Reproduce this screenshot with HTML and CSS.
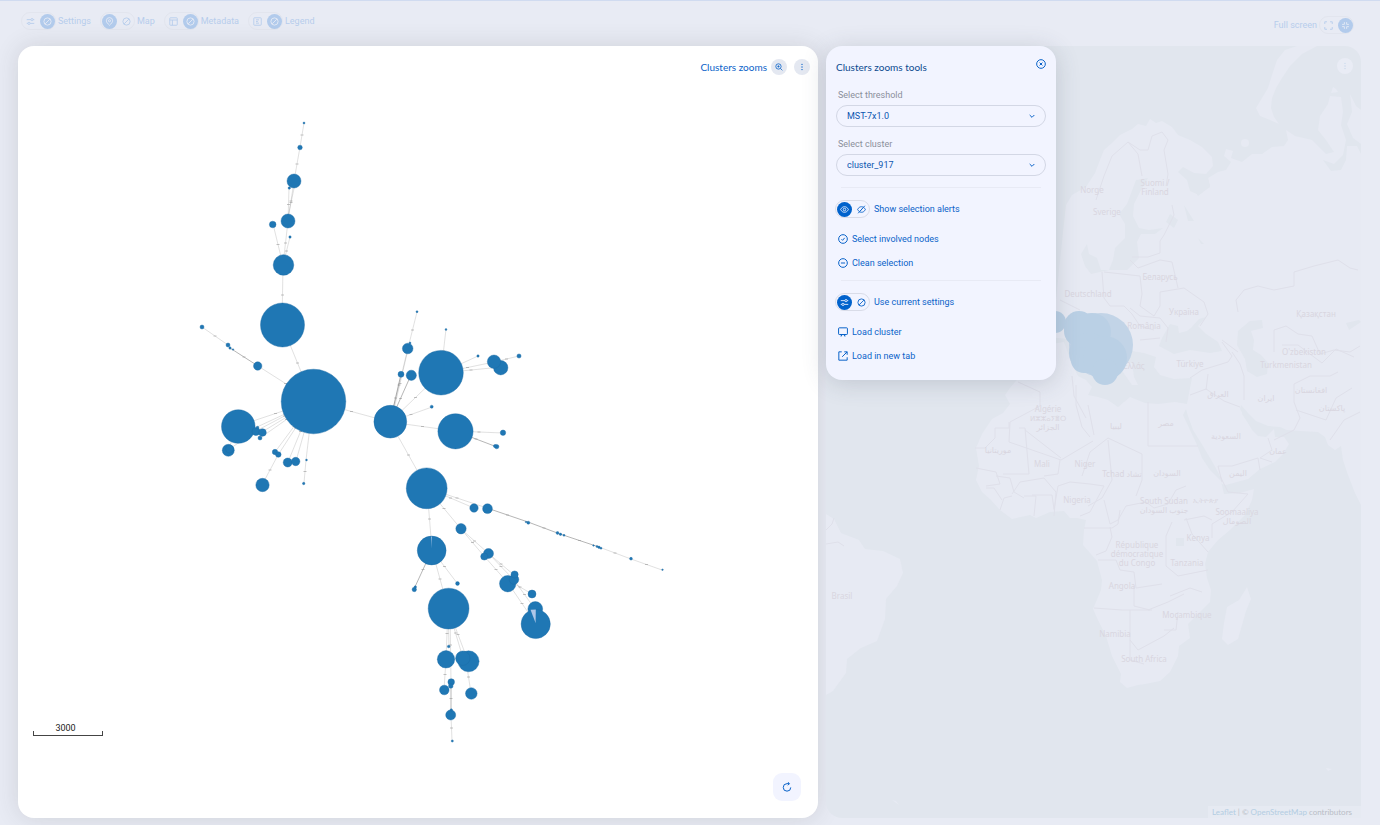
FILE: index.html
```html
<!DOCTYPE html>
<html lang="en">
<head>
<meta charset="utf-8">
<title>Clusters zooms</title>
<link rel="stylesheet" href="styles.css">
</head>
<body>
<svg class="defs" aria-hidden="true">
  <symbol id="i-sliders" viewBox="0 0 12 12"><path d="M1 3.5h5.5M9.5 3.5H11M1 8.5h1.5M5.5 8.5H11"/><circle cx="8" cy="3.5" r="1.5"/><circle cx="4" cy="8.5" r="1.5"/></symbol>
  <symbol id="i-off" viewBox="0 0 12 12"><circle cx="6" cy="6" r="4.8"/><path d="M2.8 9.2l6.4-6.4"/></symbol>
  <symbol id="i-pin" viewBox="0 0 12 12"><path d="M6 11C3.5 8.6 1.8 6.9 1.8 5a4.2 4.2 0 0 1 8.4 0C10.200 6.900 8.500 8.600 6 11z"/><circle cx="6" cy="5" r="1.400"/></symbol>
  <symbol id="i-table" viewBox="0 0 12 12"><rect x="1" y="1" width="10" height="10" rx="1"/><path d="M1 4h10M4.500 4v7"/></symbol>
  <symbol id="i-legend" viewBox="0 0 12 12"><rect x="1" y="1" width="10" height="10" rx="1"/><path d="M4 3.800h4M4 6h2.500M4 8.200h4"/></symbol>
  <symbol id="i-expand" viewBox="0 0 12 12"><path d="M1 4V1h3M8 1h3v3M11 8v3H8M4 11H1V8"/></symbol>
  <symbol id="i-shrink" viewBox="0 0 12 12"><path d="M1.500 4.500h3v-3M7.500 1.500v3h3M10.500 7.500h-3v3M4.500 10.500v-3h-3"/></symbol>
  <symbol id="i-zoom" viewBox="0 0 12 12"><circle cx="5.200" cy="5.200" r="4"/><path d="M8.200 8.200L11 11M3.500 5.200h3.400M5.200 3.500v3.400"/></symbol>
  <symbol id="i-dots" viewBox="0 0 12 12"><circle cx="6" cy="2" r=".5"/><circle cx="6" cy="6" r=".5"/><circle cx="6" cy="10" r=".5"/></symbol>
  <symbol id="i-close" viewBox="0 0 12 12"><circle cx="6" cy="6" r="5.200"/><path d="M4.300 4.300l3.400 3.400M7.700 4.300L4.300 7.700"/></symbol>
  <symbol id="i-eye" viewBox="0 0 12 12"><path d="M.8 6C2 3.600 3.800 2.300 6 2.300S10 3.600 11.200 6C10 8.400 8.200 9.700 6 9.700S2 8.400.8 6z"/><circle cx="6" cy="6" r="1.700"/></symbol>
  <symbol id="i-eyeoff" viewBox="0 0 12 12"><path d="M.8 6C2 3.600 3.800 2.300 6 2.300S10 3.600 11.200 6C10 8.400 8.200 9.700 6 9.700S2 8.400.8 6zM1.500 11l9-10M4.500 7.600l3-3.200"/></symbol>
  <symbol id="i-check" viewBox="0 0 12 12"><circle cx="6" cy="6" r="5.200"/><path d="M4.200 6.300l1.300 1.300 2.500-3"/></symbol>
  <symbol id="i-minus" viewBox="0 0 12 12"><circle cx="6" cy="6" r="5.200"/><path d="M3.500 6h5"/></symbol>
  <symbol id="i-screen" viewBox="0 0 12 12"><path d="M1.500 1h9a.8.8 0 0 1 .8.8v6.400a.8.8 0 0 1-.8.8h-9a.8.8 0 0 1-.8-.8V1.800a.8.8 0 0 1 .8-.8zM4.300 9v1.800H3M7.700 9v1.800H9"/></symbol>
  <symbol id="i-newtab" viewBox="0 0 12 12"><path d="M4.500 1H1v10h10V7.500M7.500 1H11v3.500M11 1L5 7"/></symbol>
  <symbol id="i-chevron" viewBox="0 0 12 12"><path d="M2.500 4.500L6 8l3.500-3.500"/></symbol>
  <symbol id="i-reload" viewBox="0 0 12 12"><path d="M10.500 6.500A4.500 4.500 0 1 1 6 2h2.800M7 .2L8.900 2 7 3.900"/></symbol>
</svg>

<header class="topbar">
  <nav class="switches" aria-label="Panels">
    <label class="switch"><span class="pill"><input type="checkbox"><svg class="ic"><use href="#i-sliders"/></svg><svg class="ic on"><use href="#i-off"/></svg></span>Settings</label>
    <label class="switch"><span class="pill"><input type="checkbox" checked><svg class="ic on"><use href="#i-pin"/></svg><svg class="ic"><use href="#i-off"/></svg></span>Map</label>
    <label class="switch"><span class="pill"><input type="checkbox"><svg class="ic"><use href="#i-table"/></svg><svg class="ic on"><use href="#i-off"/></svg></span>Metadata</label>
    <label class="switch"><span class="pill"><input type="checkbox"><svg class="ic"><use href="#i-legend"/></svg><svg class="ic on"><use href="#i-off"/></svg></span>Legend</label>
  </nav>
  <label class="switch fullscreen">Full screen<span class="pill"><input type="checkbox"><svg class="ic"><use href="#i-expand"/></svg><svg class="ic on"><use href="#i-shrink"/></svg></span></label>
</header>

<main class="workspace">
  <section class="tree">
    <svg class="graph" id="graph" viewBox="18 46 800 772" role="img" aria-label="Minimum spanning tree"></svg>
    <div class="tree-head">
      <span>Clusters zooms</span>
      <button class="round" type="button" aria-label="Zoom tools"><svg class="ic"><use href="#i-zoom"/></svg></button>
      <button class="round more" type="button" aria-label="More"><svg class="ic"><use href="#i-dots"/></svg></button>
    </div>
    <div class="scale"><span>3000</span></div>
    <button class="reload" type="button" aria-label="Reload"><svg class="ic"><use href="#i-reload"/></svg></button>
  </section>

  <section class="mapside">
    <div class="map">
      <svg class="world" viewBox="826 46 535 772" preserveAspectRatio="xMidYMid slice" role="img" aria-label="World map">
        <g class="land">
          <path d="M1297 46L1285 50 1277 60 1272 75 1268 88 1262 98 1256 108 1260 116 1270 120 1279 124 1274 117 1271 108 1272 98 1276 88 1282 78 1290 66 1302 54 1317 46z"/>
          <path d="M1333 87l3 2 2 3-7 1z"/><circle cx="1245" cy="143" r="4"/>
          <path d="M1350 94l6 12 5 4v34l-8-6-6-14 5-12z"/>
          <path d="M1063 232L1066 205 1072 195 1086 187 1095 173 1100 160 1104 150 1112 143 1120 135 1132 129 1138 124 1146 126 1150 119 1156 123 1162 121 1172 127 1178 135 1190 140 1202 147 1212 157 1213 166 1206 174 1194 173 1183 167 1178 172 1187 180 1190 191 1199 195 1210 187 1208 178 1218 172 1226 170 1231 162 1224 156 1226 149 1233 151 1231 158 1242 162 1252 154 1262 154 1272 147 1284 146 1288 140 1286 130 1295 136 1312 140 1326 154 1334 152 1326 140 1318 130 1320 116 1328 104 1330 96 1341 97 1343 112 1341 125 1346 140 1343 155 1334 164 1323 160 1331 171 1341 170 1346 160 1347 146 1357 146 1361 154V505L1355 493 1348 475 1343 460 1341 446 1335 450 1328 445 1325 437 1318 432 1300 431 1287 430 1280 427 1268 426 1256 421 1248 413 1241 405 1240 409 1246 419 1252 430 1258 436 1266 437 1271 432 1274 429 1275 437 1284 437 1289 444 1283 454 1275 462 1260 469 1248 479 1226 485 1222 484 1219 474 1213 463 1203 446 1193 430 1188 416 1186 409 1183 415 1190 430 1197 445 1202 458 1210 470 1221 481 1224 494 1240 493 1254 489 1252 500 1245 515 1230 530 1218 540 1208 552 1205 564 1207 578 1211 590 1210 602 1200 612 1188 624 1190 638 1179 646 1178 656 1170 672 1160 681 1145 684 1138 685 1127 688 1120 682 1121 674 1112 656 1106 636 1098 620 1093 609 1101 590 1102 580 1097 561 1083 545 1084 530 1086 520 1077 518 1070 518 1064 511 1050 512 1036 518 1030 515 1012 519 1000 510 990 499 982 492 976 480 979 466 976 448 982 434 992 419 1003 413 1010 404 1005 395 1010 388 1020 376 1040 340 1056 300z"/>
          <path d="M1247 587l4 12-5 12-8 28-10 6-6-6 2-16 3-16 12-7z"/>
          <path d="M826 514l8 5 7 14 18 7 6 9 18 2 17 8 3 14-6 13-11 13-1 20-8 22-16 7-14 11-1 14-13 18-7 4z"/>
          <path d="M892 800l4 1 3 4zM1326 768l6 1-4 2z"/>
        </g>
        <g class="water">
          <path d="M1136 180l12-2-8 14-6 12-1 12 6 12 10 2 14-2-8 6-14 0-4 8 2 16-12 12-18 0-18 4-6-8-4-12 6-10 2 10 8 4 4 12 8 0 4-10 2-12 10-10 0-14-6-10 8-10z"/>
          <path d="M1170 214l8 6-4 8-8-6zM1184 205l5 8 5 8-6 0zM1188 180l20-2 2 8-12 10zM1198 238l6 6-3 0z"/>
          <path d="M1040 380l12-36 12-2 8 22 6 12 8 4 6 7-4 8 10 2 10 3 10 7 12-10 15 6 13 1 17-2 12 2 3-16 2-10-18 1-14-4-6-8 2-10-12-4-12-2-14 10 14 2 2 14 4 8-6 0-14-20-20-10-20-20-10 4-20-2z"/>
          <path d="M1159 346l3-8 8-14 8 2 1 7 8-2 4-3 8-9 7-2-8 9 8 8 12 8 4 9-12 2-20-3-16 4z"/>
          <path d="M1238 331l12-10 12-1 1 8-12 3 3 9-1 10 8 5 7 8-1 11-10 3-10-6-2-12-8-14z"/>
          <path d="M1243 408l8 14 10 4-3 8-8-8-8-12zM1346 323l13-3 2 2-12 8zM1176 538h8v8h-8z"/>
        </g>
        <g class="borders">
          <path d="M1096 200l8-24 8-20 16-14 12 8 8 0 4-14 10-4 6 8-4 10 4 24-2 12M1128 142l10 12 4 22M1172 205l2 10-10 20-4 6 0 12-12 4-16 0M1130 260l8 8 22-8 12 2 6 26M1102 272l2 26 6 8 14 0 8 8M1060 300l20 10M1104 272l36 4 2 18-2 12 14 10 6-10 0-14 24-4 20 14 4 12-8 12M1130 308l10 8 20 2 8 10-2 14M1132 314l8 12 14 4M1140 340l20-2M1238 312l-2-12 8-10 14-4 16 4 20-4 0-14 20-6 24-6 12 8 8 2M1274 352v-22l12-4 12 8 14 2 8 18 14-4 16 2 10-6M1282 345l16 0 24 18 14-14 18 8M1190 378l12-8 26-8 4-6-10-14M1222 340l16 12M1232 352l8 12 4 12 0 24M1190 395l16-6 18 12 16 6M1206 390l2-16M1274 440l20-10 6-12-6-16 0-18 16-8 20 0 8-4M1296 410l30 10 10-22 16-10M1330 440l14-20 16-8M1072 376l2 20 12 22M1076 385v20l6 22 8 10M1018 382l22 10 0 14-30 16-1 20 52 18 32-19M1009 422v6h-14v10l-10 10h-10M1019 428h6l4 46h-26M1025 430l36 28M1148 402v44M1142 454l-34-16-18 14-8 24M1148 446h50M1142 454v26l-6 16M1088 405l6 30M1108 440l4 40-10 18-14 8M976 468l20 4 4 12-14 2M996 476l14 2 4 14 10 6M986 488l8 0 8 12M1000 510l4-12 8-2M1024 496h12l-2 20M1032 495l20 0 2 14M1012 494l8-12 24-4 12 14-2 24M1060 460l-2 14-14 2M1054 510l4-24 12-4 20 2 14 2M1104 486l-14 26-10 4M1104 500l6 24 8-4 8-14 20-4 8 6 14-4 8-14 10-4M1084 528h28l6-4 2-14M1098 560h18l4 10 14 2 2 16 26-4M1096 555l10-4 6-14-2-10M1094 608l28 2 30 0M1134 586v20l16 4M1130 610l0 50 14 4M1130 640l8 10 26-14 10-8M1148 610l20-8 16-8M1172 522l-6 14 0 30 12 10 30-6M1186 518l6 16 16 18M1212 538v-14l20-12 16-18-20-2-8-16M1184 520l20-4 8 4M1170 596l20-8 12 4M1178 612l-2 18-12 0M1222 482l-4-16 14 0 26-8 2 12M1272 462l-12-4 12-8-4-12M826 530l6-6 2-6M826 544l12-2 6 4"/>
        </g>
        <g class="names">
          <text x="1092" y="193">Norge</text><text x="1155" y="186">Suomi /</text><text x="1155" y="195">Finland</text>
          <text x="1107" y="215">Sverige</text><text x="1160" y="280">Беларусь</text><text x="1088" y="297">Deutschland</text>
          <text x="1184" y="315">Україна</text><text x="1144" y="329">România</text><text x="1316" y="317">Қазақстан</text>
          <text x="1304" y="355">O'zbekiston</text><text x="1286" y="368">Turkmenistan</text><text x="1190" y="367">Türkiye</text><text x="1134" y="369">Ελλάς</text>
          <text x="1218" y="397">العراق</text><text x="1266" y="401">ایران</text><text x="1311" y="393">افغانستان</text><text x="1332" y="411">پاکستان</text>
          <text x="1048" y="412">Algérie</text><text class="small" x="1048" y="421">ⵍⵣⵣⴰⵢⴻⵔ</text><text x="1048" y="430">الجزائر</text>
          <text x="998" y="453">موريتانيا</text><text x="1042" y="467">Mali</text><text x="1085" y="467">Niger</text><text x="1122" y="477">Tchad تشاد</text>
          <text x="1116" y="429">ليبيا</text><text x="1166" y="426">مصر</text><text x="1226" y="439">السعودية</text><text x="1278" y="454">عمان</text><text x="1238" y="476">اليمن</text>
          <text x="1167" y="476">السودان</text><text x="1077" y="503">Nigeria</text><text x="1164" y="504">South Sudan</text><text x="1164" y="513">جنوب السودان</text>
          <text class="small" x="1205" y="503">ኢትዮጵያ</text><text x="1237" y="515">Soomaaliya</text><text x="1237" y="524">الصومال</text><text x="1198" y="541">Kenya</text>
          <text x="1137" y="548">République</text><text x="1137" y="557">démocratique</text><text x="1137" y="566">du Congo</text><text x="1187" y="566">Tanzania</text>
          <text x="1122" y="589">Angola</text><text x="1187" y="618">Moçambique</text><text x="1115" y="637">Namibia</text><text x="1144" y="662">South Africa</text><text x="842" y="599">Brasil</text>
        </g>
        <g class="bubbles">
          <circle class="pale" cx="1101" cy="345" r="32"/>
          <circle cx="1055" cy="322" r="11"/><circle cx="1079" cy="326" r="15"/><circle cx="1080" cy="331" r="16"/><circle cx="1092" cy="332" r="19"/><circle cx="1089" cy="353" r="20"/><circle cx="1084" cy="360" r="13"/><circle cx="1105" cy="358" r="22"/><circle cx="1105" cy="372" r="13"/>
        </g>
      </svg>
      <button class="round mapmore" type="button" aria-label="Map options"><svg class="ic"><use href="#i-dots"/></svg></button>
      <div class="credit"><a href="#">Leaflet</a> | © <a href="#">OpenStreetMap</a> contributors</div>
    </div>

    <aside class="tools">
      <div class="tools-head"><h2>Clusters zooms tools</h2><button class="close" type="button" aria-label="Close"><svg class="ic"><use href="#i-close"/></svg></button></div>
      <label class="caption" for="threshold">Select threshold</label>
      <div class="picker"><select id="threshold"><option>MST-7x1.0</option></select><svg class="ic"><use href="#i-chevron"/></svg></div>
      <label class="caption" for="cluster">Select cluster</label>
      <div class="picker"><select id="cluster"><option>cluster_917</option></select><svg class="ic"><use href="#i-chevron"/></svg></div>
      <hr>
      <label class="switch"><span class="pill"><input type="checkbox" checked><svg class="ic on"><use href="#i-eye"/></svg><svg class="ic"><use href="#i-eyeoff"/></svg></span>Show selection alerts</label>
      <div class="actions">
        <button type="button"><svg class="ic"><use href="#i-check"/></svg>Select involved nodes</button>
        <button type="button"><svg class="ic"><use href="#i-minus"/></svg>Clean selection</button>
      </div>
      <hr class="tight">
      <label class="switch"><span class="pill"><input type="checkbox" checked><svg class="ic on"><use href="#i-sliders"/></svg><svg class="ic"><use href="#i-off"/></svg></span>Use current settings</label>
      <div class="actions">
        <button type="button"><svg class="ic"><use href="#i-screen"/></svg>Load cluster</button>
        <button type="button"><svg class="ic"><use href="#i-newtab"/></svg>Load in new tab</button>
      </div>
    </aside>
  </section>
</main>
<script src="graph.js"></script>
</body>
</html>
```

FILE: styles.css
```css
:root {
  --blue: #0a63c9;
  --fill: #0062cc;
  --line: #d9dce8;
  --page: #e8ebf4;
  --panel: #f2f4ff;
  --faded: #b7cdec;
}
* { box-sizing: border-box; }
body {
  margin: 0;
  height: 100vh;
  display: flex;
  flex-direction: column;
  background: var(--page);
  border-top: 1px solid #d0dbf0;
  color: var(--blue);
  font: 9px/12px Roboto, "Noto Sans", sans-serif;
}
button { font: inherit; color: inherit; border: 0; background: none; padding: 0; display: flex; align-items: center; justify-content: center; }
.defs { display: none; }
.ic { display: block; flex: none; width: 10px; height: 10px; fill: none; stroke: currentColor; stroke-width: 1.2; overflow: visible; }

.topbar { flex: none; min-height: 45px; padding: 11px 26px 11px 21px; display: flex; justify-content: space-between; align-items: flex-start; color: var(--faded); }
.switches { display: flex; gap: 9px; }
.switch { display: flex; align-items: center; gap: 4px; }
.topbar .switch { gap: 2px; }
.fullscreen { padding-top: 4px; }
.pill { position: relative; display: flex; align-items: center; gap: 2px; width: 35px; height: 18px; padding: 1px; border: 1px solid var(--line); border-radius: 9px; }
.pill input { position: absolute; inset: 0; width: 100%; height: 100%; margin: 0; opacity: 0; }
.pill .ic { width: 15px; height: 15px; padding: 3px; border-radius: 50%; }
.pill .on { background: var(--fill); color: #e6eeff; }
.topbar .pill { border-color: #e2e5ee; }
.topbar .on { background: #b2cbec; color: #e6ebf5; }
.tools .pill { margin-left: -1px; }

.workspace { flex: 1; min-height: 0; display: grid; grid-template-columns: 800fr 535fr; gap: 8px; padding: 0 19px 7px 18px; }
.tree { position: relative; min-width: 0; background: #fff; border-radius: 16px; box-shadow: 0 0 24px rgba(60, 60, 60, .14); }
.graph { display: block; position: absolute; width: 100%; height: 100%; }
.edge { stroke: #777; stroke-opacity: .38; stroke-width: .6; }
.strong { stroke: #333; stroke-opacity: .6; }
.tag { stroke: #999; stroke-opacity: .6; stroke-width: 1; }
.node { fill: #1f77b4; stroke: #1b6ba3; stroke-width: .4; }
.wedge { fill: #aec7e8; }
.tree-head { position: absolute; top: 13px; right: 8px; display: flex; align-items: center; gap: 4px; font: 10px/16px Lato, sans-serif; }
.round { width: 16px; height: 16px; border-radius: 50%; background: #e4e8f1; }
.round .ic { width: 8px; height: 8px; }
.more { margin-left: 3px; }
.scale { position: absolute; left: 15px; bottom: 82px; width: 70px; height: 14px; color: #222; font: 9px/12px Roboto, sans-serif; text-align: center; padding-right: 5px; }
.scale::after { content: ""; position: absolute; left: 0; right: 0; bottom: 0; height: 4px; border: 1px solid #444; border-top: 0; }
.reload { position: absolute; right: 17px; bottom: 17px; width: 28px; height: 28px; border-radius: 9px; background: var(--panel); }

.mapside { position: relative; min-width: 0; }
.map { position: relative; height: 100%; overflow: hidden; border-radius: 16px 16px 0 16px; background: #e1e6ee; }
.world { display: block; position: absolute; width: 100%; height: 100%; }
.land { fill: #e7eaf3; }
.water { fill: #e1e6ee; }
.borders { fill: none; stroke: #dfe0ea; stroke-width: 1; stroke-linejoin: round; }
.names { fill: #d9d6e0; font: 8px "Noto Sans", "DejaVu Sans", sans-serif; text-anchor: middle; }
.small { font-size: 7px; }
.bubbles { fill: #bad0e5; }
.pale { fill: #c2d4e7; }
.mapmore { position: absolute; top: 12px; right: 8px; background: #e9ecf5; color: #c9d8ec; }
.credit { position: absolute; right: 0; bottom: 0; padding: 0 9px 0 4px; background: #e6eaf2; color: #b9bdc6; font: 8px/12px Lato, sans-serif; white-space: nowrap; }
.credit a { color: #b3cde2; text-decoration: none; }

.tools { position: absolute; top: 0; left: 0; width: 230px; padding: 11px 10px 12px; border-radius: 16px; background: var(--panel); box-shadow: 0 3px 24px rgba(60, 70, 90, .2); }
.tools-head { display: flex; justify-content: space-between; height: 20px; margin-bottom: 11px; }
.tools h2 { margin: 0; font: 400 10px/20px Lato, sans-serif; color: #0b4a8f; }
.close { width: 10px; height: 14px; }
.caption { display: block; padding-left: 2px; line-height: 14px; color: #8b8f9b; }
.picker { position: relative; display: flex; align-items: center; margin: 3px 0 10px; }
.picker select { appearance: none; width: 100%; height: 22px; padding: 0 10px; border: 1px solid #d3d7e5; border-radius: 11px; background: transparent; font: inherit; color: #0b56b0; }
.picker .ic { position: absolute; right: 10px; width: 8px; height: 8px; pointer-events: none; stroke-width: 1.5; }
hr { margin: 11px 5px 12px; border: 0; border-top: 1px solid #e8eaf5; }
.tight { margin-top: 5px; }
.actions { margin-top: 9px; }
.actions button { height: 24px; padding-left: 2px; gap: 4px; }
```

FILE: graph.js
```js
const NS = "http://www.w3.org/2000/svg";
const svg = document.getElementById("graph");

function draw(name, attrs) {
  const el = document.createElementNS(NS, name);
  for (const key in attrs) el.setAttribute(key, attrs[key]);
  svg.appendChild(el);
}

// x1, y1, x2, y2, strong
const edges = [
  [304,123,300,147],[300,147,294,181],[294,181,288,221],[295,184,287,221],[289,188,288,221],[288,221,283,265],[273,224,283,265],[290,237,283,265],[283,265,282,325],
  [282,325,313,401],[202,327,228,345],[230,348,258,366,1],[258,366,313,401],
  [313,401,238,426],[313,401,256,431],[313,401,262,432],[313,401,260,438],[313,401,257,427],[238,426,228,450],[256,431,228,450],
  [313,401,275,452],[313,401,278,455],[313,401,288,462],[313,401,296,461],[278,455,262,485],[313,401,306,460],[306,460,304,483],
  [313,401,390,422],[417,312,408,348],[408,348,390,422],[401,374,390,422,1],[411,375,390,422,1],[409,345,391,422],
  [390,422,441,373],[446,329,441,373],[478,356,441,373],[494,362,441,373],[501,367,441,373],[519,356,494,362],
  [432,407,390,422],[390,422,455,431],[455,431,503,433],[455,431,497,447,1],[390,422,427,488],
  [427,488,474,508],[427,488,487,508],[487,508,528,522,1],[528,522,560,534,1],[560,534,599,547,1],[599,547,631,559],[631,559,662,570],
  [427,488,461,529],[461,529,488,553],[461,529,484,556],[484,556,508,583],[488,553,514,575],[488,553,514,580],[508,580,532,594],[514,580,535,609],[508,583,536,624],
  [427,488,432,550],[432,550,414,589,1],[432,550,457,583],[432,550,448,608],
  [448,608,446,659],[448,608,449,647],[448,608,463,658],[448,608,468,661],[450,608,451,682],[446,659,444,690],[466,661,471,693],[451,682,451,715,1],[451,715,452,741]
];

// x, y, radius
const nodes = [
  [304,123,1],[300,147.5,2.3],[294,181,7],[289.3,188,1.2],[288,221,7],[272.7,224.5,3.3],[290,237,1.2],[283.5,265,10.3],[282.5,325,22],[202,327,2],
  [228,345,2],[230,348,1.2],[233,349.5,0.8],[257.7,366,4.2],[313.5,401.5,32.3],[238.3,426.5,16.8],[256,431.5,4],[262.5,432.5,3.8],[260,438,2],[257.5,427.5,1.3],
  [228.3,450.3,6],[229.5,449,4],[275,452,2.7],[278.3,454.5,2.8],[287.7,462.5,4.5],[295.7,461.5,4.2],[262.5,485,6.7],[306.5,460,0.9],[303.7,483.5,1.2],
  [417,311.7,1],[407.7,348.5,5.3],[410,343,1],[446,329.5,0.9],[441,372.7,22.3],[478,356,1.2],[500.7,367.7,7.2],[494,361.7,6.7],[519,356,2.1],[401,374.3,3],[411.3,375.3,5.1],
  [390.3,421.7,16.4],[431.7,406.7,1.5],[455.5,431.3,17.6],[503,432.7,2.7],[496.7,446.6,2.2],[495,446,1.6],[426.7,488.3,20.4],[474,508,4.2],[487.5,508.7,4.9],
  [528.3,522.7,1.5],[526,522,0.8],[557.5,533,1.4],[560.5,534.3,1.2],[564,535.3,1],[593.5,545.5,0.8],[597,546.5,1],[599,547.3,1.2],[601,548.2,1],[631,558.7,1.4],[662.5,569.7,0.8],
  [461,528.7,5.2],[431.7,550.5,14.4],[488.5,553.5,5],[484.3,556.5,3.6],[414.3,589.5,2.2],[415.3,587,1.2],[457.5,583.5,1.9],[448.6,608.6,20.4],
  [507.7,583.7,8.2],[514,579.5,4.8],[514.6,574.5,3.6],[532,594,4],[535.3,609,7.4],[535.7,624,14.6],[448.7,646.5,1.3],[446,659.3,8.7],[468.6,661.3,10.5],[462.8,658.2,7.2],
  [451.2,682,3.3],[450.8,686,2.3],[444.3,690,4.8],[471.3,693.5,5.8],[450.7,715,5],[451.3,710,1.2],[452.3,741,1.1]
];

for (const [x1, y1, x2, y2, strong] of edges) {
  draw("line", { x1, y1, x2, y2, class: strong ? "edge strong" : "edge" });
  const mx = (x1 + x2) / 2, my = (y1 + y2) / 2;
  draw("line", { x1: mx - 1.5, y1: my, x2: mx + 1.5, y2: my, class: "tag" });
}
for (const [cx, cy, r] of nodes) draw("circle", { cx, cy, r, class: "node" });

draw("path", { d: "M535.600 623L530.500 609.800 535.800 609.500z", class: "wedge" });
draw("path", { d: "M431.600 548L431.200 536.500 432 536.500z", class: "wedge" });
```
